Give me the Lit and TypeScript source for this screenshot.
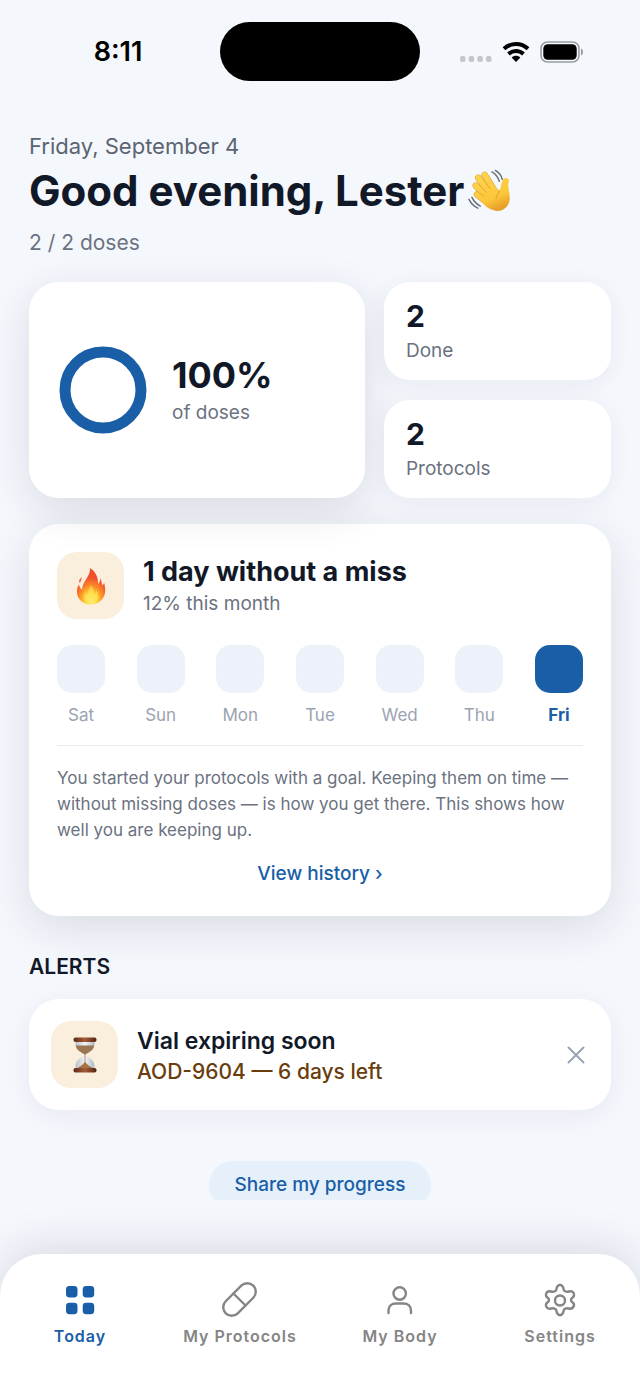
import { LitElement, html, css, svg } from "lit";
import { customElement, state } from "lit/decorators.js";
import { classMap } from "lit/directives/class-map.js";

const wave = html`<svg class="wave" viewBox="0 0 46 46" aria-label="waving hand" role="img">
  <defs><linearGradient id="skin" gradientUnits="userSpaceOnUse" x1="14" y1="4" x2="32" y2="44">
    <stop offset="0" stop-color="#ffd54d"/><stop offset="0.65" stop-color="#fcc63a"/><stop offset="1" stop-color="#e2951f"/>
  </linearGradient></defs>
  <g stroke-linecap="round" fill="none">
    <path d="M17 6 L27 22" stroke="#dd9a26" stroke-width="6.600"/><path d="M17 6 L27 22" stroke="url(#skin)" stroke-width="5.600"/>
    <path d="M10.500 9 L24 27" stroke="#dd9a26" stroke-width="6.600"/><path d="M10.500 9 L24 27" stroke="url(#skin)" stroke-width="5.600"/>
    <path d="M8 17 L21 31" stroke="#dd9a26" stroke-width="6.600"/><path d="M8 17 L21 31" stroke="url(#skin)" stroke-width="5.600"/>
    <path d="M9 26 L20 35" stroke="#dd9a26" stroke-width="6.200"/><path d="M9 26 L20 35" stroke="url(#skin)" stroke-width="5.200"/>
  </g>
  <path d="M16 28 L26 17.500 L32 22 C34.500 19 33.500 13 36.500 10 C39 8 43 10 41.500 14 C40 19 43.500 25 42.500 32 C41 41 32 45.500 24 41.500 C19 39 15 36 14 33 Z" fill="url(#skin)"/>
  <path d="M32 22 C32.500 25 29 26 28.500 30" stroke="#dd9a26" stroke-width="0.900" fill="none" stroke-linecap="round"/>
  <path d="M24.500 3 C28 5 30.500 8 32 12.500 M28 1.500 C31.500 3.500 34 6.500 35 10.500 M1 31 C3 35 6 38 10 40 M4 29 C6 33 9 36 12.500 38" stroke="#67707a" stroke-width="1.500" fill="none" stroke-linecap="round"/>
</svg>`;

const flame = html`<svg class="flame" viewBox="0 0 30 38" aria-label="fire" role="img">
  <defs><radialGradient id="fire" cx="0.5" cy="0.9" r="0.85">
    <stop offset="0" stop-color="#fff27a"/><stop offset="0.25" stop-color="#ffd338"/><stop offset="0.5" stop-color="#fb8a26"/><stop offset="0.75" stop-color="#f0512c"/>
  </radialGradient></defs>
  <path d="M14 1 C19 4 22.500 10 22 17 C23.500 16 24.500 13.500 24 11 C25.500 13 25.500 16 26.500 18.500 C27.500 17.500 28 16.500 28 15.500 C30 23 30 29 24.500 34 C19 38.500 10 38.500 5 34 C0 29.500 0 22 3 17.500 C3.500 20 4.500 22 6 22.500 C6.500 14 14.500 10 14 1 Z" fill="url(#fire)"/>
  <path d="M5.500 10 C4.500 11.500 3 12.500 3 14.500 C3 16 4 16 4.500 15 C5 13.500 6 12 5.500 10 Z" fill="#f26a45"/>
  <path d="M14.500 18 C18 22 17.500 25 19 27 C20 26 20.500 24.500 20.500 23 C23.500 29 22 36.500 15 36.500 C8 36.500 7 30 9.500 25.500 C10 27 10.500 28 11.500 28 C11 24 14.500 22 14.500 18 Z" fill="#ffe860" opacity="0.6"/>
</svg>`;

const hourglass = html`<svg class="hourglass" viewBox="0 0 24 36" aria-label="hourglass" role="img">
  <defs><linearGradient id="wood" x1="0" x2="1"><stop offset="0" stop-color="#5b2a17"/><stop offset="0.5" stop-color="#a35c39"/><stop offset="1" stop-color="#52230f"/></linearGradient>
  <linearGradient id="glass" x1="0" x2="1"><stop offset="0" stop-color="#b9c0c6"/><stop offset="0.5" stop-color="#f4f5f7"/><stop offset="1" stop-color="#aab7c6"/></linearGradient></defs>
  <path d="M2.500 4 H21.500 C22.500 12 17 15.500 12.800 17 V19 C17 20.500 22.500 24 21.500 32 H2.500 C1.500 24 7 20.500 11.200 19 V17 C7 15.500 1.500 12 2.500 4 Z" fill="url(#glass)"/>
  <path d="M2.800 8.500 H21.200 C20.500 13 16.500 15.200 12 17.500 C7.500 15.200 3.500 13 2.800 8.500 Z" fill="#9a7651"/>
  <path d="M11.600 17 H12.400 V25 C14 28 17 29 20 31.500 H4 C7 29 10 28 11.600 25 Z" fill="#a47544"/>
  <rect x="0.500" y="0.500" width="23" height="4.500" rx="2" fill="url(#wood)"/>
  <rect x="0.500" y="31" width="23" height="4.500" rx="2" fill="url(#wood)"/>
</svg>`;

const icons = {
  grid: svg`<g fill="currentColor"><rect x="6" y="6" width="11.500" height="11.500" rx="3.400"/><rect x="22.700" y="6" width="11.500" height="11.500" rx="3.400"/><rect x="6" y="22.700" width="11.500" height="11.500" rx="3.400"/><rect x="22.700" y="22.700" width="11.500" height="11.500" rx="3.400"/></g>`,
  pill: svg`<g transform="rotate(45 19.500 19.500)"><rect x="11" y="0" width="17" height="39" rx="8.500"/><path d="M11 19.500 H28"/></g>`,
  person: svg`<circle cx="19.700" cy="13.500" r="6.200"/><path d="M8.500 33 V30.500 C8.500 26 11.500 23.500 16 23.500 H23.500 C28 23.500 31 26 31 30.500 V33"/>`,
  gear: svg`<circle cx="20" cy="20.500" r="5"/><path d="M17 7 Q20 2.500 23 7 L24 10.500 Q26 12.500 29 11.500 Q33.500 10.500 34 14.500 Q34.500 16.500 31.500 18.500 Q30.500 20 31.500 21.500 Q34.500 23.500 34 25.500 Q32.500 29.500 29 28.500 Q26 27.500 24 29.500 L23 33 Q20 37.500 17 33 L16 29.500 Q14 27.500 11 28.500 Q7 29.500 6 25.500 Q5.500 23.500 8.500 21.500 Q9.500 20 8.500 18.500 Q5.500 16.500 6 14.500 Q7 10.500 11 11.500 Q14 12.500 16 10.500 Z"/>`,
};

@customElement("status-bar")
class StatusBar extends LitElement {
  static styles = css`
    :host { display: grid; grid-template-columns: 1fr 200px 1fr; align-items: center; padding-top: 22px; }
    .time { padding-left: 16px; text-align: center; font-size: 27px; line-height: 32px; font-weight: 600; color: #000; }
    .island { height: 59px; border-radius: 30px; background: #000; }
    .signals { display: flex; align-items: center; justify-content: center; gap: 10px; padding-right: 16px; }
    .dots { width: 32px; height: 6px; padding-top: 14px; }
    .wifi { width: 28px; height: 22px; }
    .battery { width: 44px; height: 22px; }
  `;
  render() {
    return html`<div class="time">8:11</div><div class="island"></div>
      <div class="signals">
        <svg class="dots" viewBox="0 0 32 6" fill="#c3c6ca"><rect width="5.500" height="6" rx="2"/><rect x="8.700" width="5.500" height="6" rx="2"/><rect x="17.300" width="5.500" height="6" rx="2"/><rect x="26" width="5.500" height="6" rx="2"/></svg>
        <svg class="wifi" viewBox="0 0 28 22" fill="none" stroke="#000" stroke-width="4"><path d="M2 7.800 C8.800 1.300 19.200 1.300 26 7.800"/><path d="M6.500 13 C10.800 9 17.200 9 21.500 13"/><path d="M14 21 L9.600 16.600 C12 14.200 16 14.200 18.400 16.600 Z" fill="#000" stroke="none"/></svg>
        <svg class="battery" viewBox="0 0 44 22"><rect x="1" y="1" width="38" height="20" rx="6.500" fill="none" stroke="#9a9da1" stroke-width="1.600"/><rect x="3.300" y="3.300" width="33.400" height="15.400" rx="4.400"/><path d="M41 7.500 C43.800 8.500 43.800 13.500 41 14.500 Z" fill="#9a9da1"/></svg>
      </div>`;
  }
}

@customElement("tab-bar")
class TabBar extends LitElement {
  @state() private active = "Today";
  private tabs = [
    { label: "Today", icon: icons.grid },
    { label: "My Protocols", icon: icons.pill },
    { label: "My Body", icon: icons.person },
    { label: "Settings", icon: icons.gear },
  ];
  static styles = css`
    :host { display: block; position: relative; background: #fff; border-radius: 42px 42px 0 0; box-shadow: 0 -6px 44px rgba(30, 35, 60, 0.13); }
    nav { display: grid; grid-template-columns: repeat(4, 1fr); padding: 26px 0 43px; }
    .tab { display: flex; flex-direction: column; align-items: center; gap: 4px; padding: 0; border: 0; background: none; font: inherit; font-size: 16px; line-height: 24px; font-weight: 600; letter-spacing: 1px; color: #858585; cursor: pointer; }
    .tab.active { color: #195ea6; }
    .icon { width: 40px; height: 40px; fill: none; stroke: currentColor; stroke-width: 2.4; stroke-linecap: round; stroke-linejoin: round; overflow: visible; }
    .active .icon { stroke: none; }
  `;
  render() {
    return html`<nav>${this.tabs.map((t) => html`
      <button class=${classMap({ tab: true, active: t.label === this.active })} @click=${() => (this.active = t.label)}>
        <svg class="icon" viewBox="0 0 40 40">${t.icon}</svg>${t.label}
      </button>`)}</nav>`;
  }
}

@customElement("app-root")
class AppRoot extends LitElement {
  private days = ["Sat", "Sun", "Mon", "Tue", "Wed", "Thu", "Fri"];
  static styles = css`
    :host { display: flex; flex-direction: column; height: 100vh; background: #f4f7fc; color: #111827; font-family: Inter, "Liberation Sans", sans-serif; }
    * { box-sizing: border-box; }
    h1, h2, p { margin: 0; }
    button { border: 0; font: inherit; cursor: pointer; }
    .scroll { flex: 1; min-height: 0; overflow-y: auto; scrollbar-width: none; margin-bottom: 54px; }
    .content { padding: 51px 29px 40px; }
    .date { font-size: 22px; line-height: 28px; color: #5b6470; }
    h1 { display: flex; align-items: center; gap: 4px; margin-top: 4px; font-size: 42px; line-height: 54px; font-weight: 700; }
    .doses { margin-top: 11px; font-size: 21px; line-height: 28px; color: #6b7280; }
    .wave { width: 45px; height: 45px; }
    .card { background: #fff; border-radius: 30px; box-shadow: 0 12px 44px rgba(30, 35, 60, 0.12); }
    .stats { display: grid; grid-template-columns: 1.48fr 1fr; gap: 19px; margin-top: 25px; }
    .progress { display: flex; align-items: center; gap: 25px; padding: 30px; }
    .ring { width: 88px; height: 88px; fill: none; stroke: #195ea6; stroke-width: 11; }
    .percent { font-size: 36px; line-height: 46px; font-weight: 700; }
    .muted { font-size: 19px; line-height: 30px; color: #6b7280; }
    .side { display: grid; gap: 20px; }
    .small { display: grid; gap: 2px; padding: 16px 22px 14px; border-radius: 26px; box-shadow: 0 4px 26px rgba(30, 35, 60, 0.06); }
    .number { font-size: 30px; line-height: 36px; font-weight: 700; }
    .streak { margin-top: 26px; padding: 28px; }
    .row { display: flex; align-items: center; gap: 19px; }
    .tile { display: grid; place-items: center; flex: none; width: 67px; height: 67px; border-radius: 20px; background: #faeedd; }
    .flame { width: 30px; height: 38px; }
    .hourglass { width: 24px; height: 36px; }
    .copy { flex: 1; padding-top: 3px; }
    h2 { font-size: 27px; line-height: 34px; font-weight: 700; }
    .days { display: flex; justify-content: space-between; margin-top: 26px; padding-bottom: 18px; border-bottom: 1px solid #e9edf3; }
    .day { display: flex; flex-direction: column; align-items: center; gap: 10px; width: 48px; font-size: 17px; line-height: 24px; color: #9aa3b2; }
    .box { width: 48px; height: 48px; border-radius: 15px; background: #edf2fa; }
    .today { color: #195ea6; font-weight: 700; }
    .today .box { background: #195ea6; }
    .note { margin-top: 19px; font-size: 17px; line-height: 26px; color: #6b7280; }
    .history { display: block; margin-top: 17px; text-align: center; font-size: 19px; line-height: 28px; font-weight: 500; color: #195ea6; text-decoration: none; }
    .heading { margin-top: 37px; font-size: 21px; line-height: 28px; font-weight: 600; }
    .alert { margin-top: 18px; padding: 22px; box-shadow: 0 6px 30px rgba(30, 35, 60, 0.06); }
    .alert-title { font-size: 23px; line-height: 32px; font-weight: 600; }
    .alert-sub { font-size: 21px; line-height: 30px; font-weight: 500; color: #6a3d0c; }
    .close { display: grid; place-items: center; padding: 4px; background: none; }
    .close svg { width: 18px; height: 18px; fill: none; stroke: #9aa3b4; stroke-width: 2; stroke-linecap: round; }
    .share { display: block; margin: 51px auto 0; padding: 10px 26px; border-radius: 24px; background: #e6f0fb; color: #195ea6; font-size: 19px; line-height: 28px; font-weight: 500; }
  `;
  render() {
    return html`
      <div class="scroll">
        <status-bar></status-bar>
        <main class="content">
          <p class="date">Friday, September 4</p>
          <h1>Good evening, Lester ${wave}</h1>
          <p class="doses">2 / 2 doses</p>
          <section class="stats">
            <div class="card progress">
              <svg class="ring" viewBox="0 0 88 88"><circle cx="44" cy="44" r="38"/></svg>
              <div><div class="percent">100%</div><div class="muted">of doses</div></div>
            </div>
            <div class="side">
              <div class="card small"><div class="number">2</div><div class="muted">Done</div></div>
              <div class="card small"><div class="number">2</div><div class="muted">Protocols</div></div>
            </div>
          </section>
          <section class="card streak">
            <div class="row">
              <div class="tile">${flame}</div>
              <div class="copy"><h2>1 day without a miss</h2><div class="muted">12% this month</div></div>
            </div>
            <div class="days">${this.days.map((d) => html`
              <div class=${classMap({ day: true, today: d === "Fri" })}><span class="box"></span>${d}</div>`)}
            </div>
            <p class="note">You started your protocols with a goal. Keeping them on time — without missing doses — is how you get there. This shows how well you are keeping up.</p>
            <a class="history" href="#history">View history ›</a>
          </section>
          <h2 class="heading">ALERTS</h2>
          <section class="card alert row">
            <div class="tile">${hourglass}</div>
            <div class="copy"><div class="alert-title">Vial expiring soon</div><div class="alert-sub">AOD-9604 — 6 days left</div></div>
            <button class="close" aria-label="Dismiss"><svg viewBox="0 0 18 18"><path d="M1.500 1.500 L16.500 16.500 M16.500 1.500 L1.500 16.500"/></svg></button>
          </section>
          <button class="share">Share my progress</button>
        </main>
      </div>
      <tab-bar></tab-bar>`;
  }
}
